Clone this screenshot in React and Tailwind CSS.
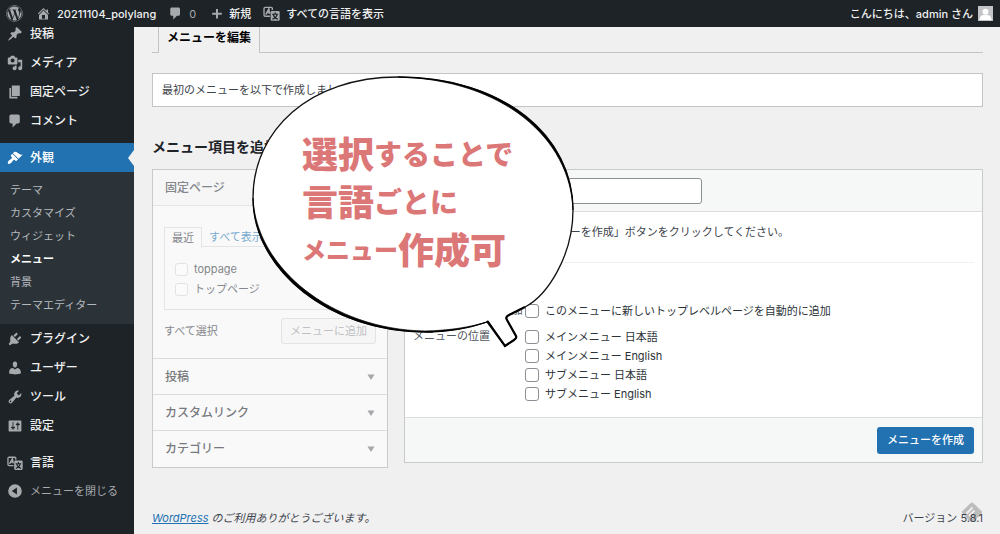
import { FaWordpress } from 'react-icons/fa'

const ICONS = {
  home: 'M16 8.5l1.53 1.53-1.06 1.06L10 4.6l-6.47 6.49-1.06-1.06L10 2.5l4 4v-2h2v4zm-6-2.46l6 5.99V18H4v-5.97zM12 17v-5H8v5h4z',
  plus: 'M18 8v3.4h-6.3v6.3H8.3v-6.3H2V8h6.3V1.7h3.4V8z',
  post: 'M10.44 3.02l1.82-1.82 6.36 6.35-1.83 1.82c-1.05-.68-2.48-.57-3.41.36l-.75.75c-.92.93-1.04 2.35-.35 3.41l-1.83 1.82-2.41-2.41-2.8 2.79c-.42.42-3.38 2.71-3.8 2.29s1.86-3.39 2.28-3.81l2.79-2.79L4.1 9.36l1.83-1.82c1.05.69 2.48.57 3.4-.36l.75-.75c.93-.92 1.05-2.35.36-3.41z',
  media: 'M13 11V4c0-.55-.45-1-1-1h-1.67L9 1H5L3.67 3H2c-.55 0-1 .45-1 1v7c0 .55.45 1 1 1h10c.55 0 1-.45 1-1zM7 4.5c1.38 0 2.5 1.12 2.5 2.5S8.38 9.5 7 9.5 4.5 8.38 4.5 7 5.62 4.5 7 4.5zM14 6h5v10.5c0 1.38-1.12 2.5-2.5 2.5S14 17.88 14 16.5s1.12-2.5 2.5-2.5c.17 0 .34.02.5.05V9h-3V6zm-4 8.05V13h2v3.5c0 1.38-1.12 2.5-2.5 2.5S7 17.88 7 16.5 8.12 14 9.5 14c.17 0 .34.02.5.05z',
  page: 'M6 15V2h10v13H6zm-1 1h8v2H3V5h2v11z',
  comment: 'M5 2h9c1.1 0 2 .9 2 2v7c0 1.1-.9 2-2 2h-2l-5 5v-5H5c-1.1 0-2-.9-2-2V4c0-1.1.9-2 2-2z',
  appearance: 'M14.48 11.06L7.41 3.99l1.5-1.5c.5-.56 2.3-.47 3.51.32 1.21.8 1.43 1.28 2.91 2.1 1.18.64 2.45 1.26 4.45.85zm-.71.71L6.7 4.7 4.93 6.47c-.39.39-.39 1.02 0 1.41l1.06 1.06c.39.39.39 1.03 0 1.42-.6.6-1.43 1.11-2.21 1.69-.35.26-.7.53-1.01.84C1.43 14.23.4 16.08 1.4 17.07c.99 1 2.84-.03 4.18-1.36.31-.31.58-.66.85-1.02.57-.78 1.08-1.61 1.69-2.21.39-.39 1.02-.39 1.41 0l1.06 1.06c.39.39 1.02.39 1.41 0z',
  plugins: 'M13.11 4.36L9.87 7.6 8 5.73l3.24-3.24c.35-.34 1.05-.2 1.56.32.52.51.66 1.21.31 1.55zm-8 1.77l.91-1.12 9.01 9.01-1.19.84c-.71.71-2.63 1.16-3.82 1.16H6.14L4.9 17.26c-.59.59-1.54.59-2.12 0-.59-.58-.59-1.53 0-2.12l1.24-1.24v-3.88c0-1.13.4-3.19 1.09-3.89zm7.26 3.97l3.24-3.24c.34-.35 1.04-.21 1.55.31.52.51.66 1.21.31 1.55l-3.24 3.25z',
  users: 'M10 9.25c-2.27 0-2.73-3.44-2.73-3.44C7 4.02 7.82 2 9.97 2c2.16 0 2.98 2.02 2.71 3.81 0 0-.41 3.44-2.68 3.44zm0 2.57L12.72 10c2.39 0 4.52 2.33 4.52 4.53v2.49s-3.65 1.13-7.24 1.13c-3.65 0-7.24-1.13-7.24-1.13v-2.49c0-2.25 1.94-4.48 4.47-4.48z',
  tools: 'M16.68 9.77c-1.34 1.34-3.3 1.67-4.95.99l-5.41 6.52c-.99.99-2.59.99-3.58 0s-.99-2.59 0-3.57l6.52-5.42c-.68-1.65-.35-3.61.99-4.95 1.28-1.28 3.12-1.62 4.72-1.06l-2.89 2.89 2.82 2.82 2.86-2.87c.53 1.58.18 3.39-1.08 4.65zM3.81 16.21c.4.39 1.04.39 1.43 0 .4-.4.4-1.04 0-1.43-.39-.4-1.03-.4-1.43 0-.39.39-.39 1.03 0 1.43z',
  settings: 'M18 16V4c0-.55-.45-1-1-1H3c-.55 0-1 .45-1 1v12c0 .55.45 1 1 1h14c.55 0 1-.45 1-1zM8 11h1c.55 0 1 .45 1 1s-.45 1-1 1H8v1.5c0 .28-.22.5-.5.5s-.5-.22-.5-.5V13H6c-.55 0-1-.45-1-1s.45-1 1-1h1V5.5c0-.28.22-.5.5-.5s.5.22.5.5V11zm5-2h-1c-.55 0-1-.45-1-1s.45-1 1-1h1V5.5c0-.28.22-.5.5-.5s.5.22.5.5V7h1c.55 0 1 .45 1 1s-.45 1-1 1h-1v5.5c0 .28-.22.5-.5.5s-.5-.22-.5-.5V9z',
  collapse: 'M10 1.5a8.5 8.5 0 1 0 0 17a8.5 8.5 0 0 0 0-17zM12.4 5.6v8.8L6 10z',
}

const MAIN_MENU = [
  { label: '投稿', icon: 'post' },
  { label: 'メディア', icon: 'media' },
  { label: '固定ページ', icon: 'page' },
  { label: 'コメント', icon: 'comment' },
]

const APPEARANCE_MENU = ['テーマ', 'カスタマイズ', 'ウィジェット', 'メニュー', '背景', 'テーマエディター']

const TOOL_MENU = [
  { label: 'プラグイン', icon: 'plugins' },
  { label: 'ユーザー', icon: 'users' },
  { label: 'ツール', icon: 'tools' },
  { label: '設定', icon: 'settings' },
]

const ACCORDION = ['投稿', 'カスタムリンク', 'カテゴリー']

const LOCATIONS = ['メインメニュー 日本語', 'メインメニュー English', 'サブメニュー 日本語', 'サブメニュー English']

function Icon({ name, className = 'size-4' }) {
  if (name === 'language') {
    return (
      <svg viewBox="0 0 20 20" className={`${className} shrink-0`} fill="none" stroke="currentColor" aria-hidden="true">
        <path d="M8.2 13.2H2.6a1.4 1.4 0 0 1-1.4-1.4V4.2a1.4 1.4 0 0 1 1.4-1.4h7a1.4 1.4 0 0 1 1.4 1.4v1.6" strokeWidth="1.6" />
        <path d="M3.2 11.2L6.8 4.8l1 5.6M4.6 8.8h3.2" strokeWidth="1.8" />
        <rect x="9" y="7" width="10.6" height="11.6" rx="1.4" fill="currentColor" stroke="none" />
        <path d="M14.3 8.6v1.8M10.8 10.9h7M12 11.2c.6 2.4 2.6 4.4 5.6 5.6M16.6 11.2c-.6 2.4-2.6 4.4-5.6 5.6" stroke="#1d2327" strokeWidth="1.4" />
      </svg>
    )
  }
  return (
    <svg viewBox="0 0 20 20" className={`${className} shrink-0`} fill="currentColor" fillRule="evenodd" aria-hidden="true">
      <path d={ICONS[name]} />
    </svg>
  )
}

function AdminBar() {
  return (
    <header className="relative z-10 flex h-[27px] items-center justify-between bg-[#1d2327] pl-1.5 pr-[7px] text-[11px] font-medium text-[#f0f0f1]">
      <div className="flex items-center">
        <a href="#" aria-label="WordPress" className="text-[#a7aaad]">
          <FaWordpress className="size-[17px]" />
        </a>
        <a href="#" className="ml-[13px] flex items-center gap-1.5">
          <Icon name="home" className="size-[15px] text-[#a7aaad]" />
          20211104_polylang
        </a>
        <a href="#" className="ml-3 flex items-center gap-1.5 text-[#a7aaad]">
          <Icon name="comment" className="size-[15px]" />
          <span className="font-normal">0</span>
        </a>
        <a href="#" className="ml-[15px] flex items-center gap-1.5">
          <Icon name="plus" className="size-3 text-[#a7aaad]" />
          新規
        </a>
        <a href="#" className="ml-3 flex items-center gap-1.5">
          <Icon name="language" className="size-[17px] text-[#a7aaad]" />
          すべての言語を表示
        </a>
      </div>
      <a href="#" className="flex items-center gap-[5px]">
        こんにちは、admin さん
        <svg viewBox="0 0 15 15" className="size-[15px]" aria-hidden="true">
          <rect width="15" height="15" fill="#c3c4c7" />
          <circle cx="7.5" cy="5.8" r="3" fill="#fff" />
          <path d="M1.5 14c0-3.5 2-4.800 4-5h4c2 .2 4 1.500 4 5z" fill="#fff" />
        </svg>
      </a>
    </header>
  )
}

function MenuItem({ label, icon }) {
  return (
    <li>
      <a href="#" className="flex h-[29px] items-center gap-[7px] pl-[7px] text-[12px] font-medium text-[#f0f0f1]">
        <Icon name={icon} className="size-4 text-[#a7aaad]" />
        {label}
      </a>
    </li>
  )
}

function Sidebar() {
  return (
    <nav className="w-[134px] shrink-0 bg-[#1d2327]">
      {/* list is scrolled a little under the admin bar */}
      <ul className="-mt-2">
        {MAIN_MENU.map((item) => <MenuItem key={item.label} {...item} />)}
        <li className="mt-2">
          <a href="#" className="flex h-[29px] items-center gap-[7px] bg-[#2271b1] pl-[7px] text-[12px] font-medium text-white">
            <Icon name="appearance" />
            <span className="flex-1">外観</span>
            <svg viewBox="0 0 6 16" className="h-4 w-1.5" fill="#f0f0f1" aria-hidden="true"><path d="M6 0v16L0 8z" /></svg>
          </a>
          <ul className="bg-[#2c3338] pt-1.5 pb-2">
            {APPEARANCE_MENU.map((label) => (
              <li key={label}>
                <a
                  href="#"
                  className={`flex h-[23px] items-center pl-2.5 text-[11px] ${
                    label === 'メニュー' ? 'font-bold text-white' : 'text-[#b4b9be]'
                  }`}
                >
                  {label}
                </a>
              </li>
            ))}
          </ul>
        </li>
        {TOOL_MENU.map((item) => <MenuItem key={item.label} {...item} />)}
        <li className="h-2" />
        <MenuItem label="言語" icon="language" />
        <li>
          <button type="button" className="flex h-7 items-center gap-[7px] pl-[7px] text-[11px] text-[#a7aaad]">
            <Icon name="collapse" />
            メニューを閉じる
          </button>
        </li>
      </ul>
    </nav>
  )
}

function ItemsPanel() {
  return (
    <div className="border border-[#c9cacc] bg-[#f9f9f9] text-[11px] text-[#84878b]">
      <h3 className="flex h-9 items-center border-b border-[#e4e5e6] bg-[#f6f6f6] px-3 text-[12px] font-medium">固定ページ</h3>
      <div className="border-b border-[#dcdcde] px-[11px] pt-[21px] pb-3.5">
        <div className="flex h-5">
          <button type="button" className="-mb-px h-[21px] border border-b-0 border-[#e4e5e6] bg-[#f9f9f9] px-[7px]">最近</button>
          <button type="button" className="flex-1 border-b border-[#e4e5e6] px-[7px] text-left text-[#7aaad0]">すべて表示</button>
        </div>
        <div className="border border-t-0 border-[#e4e5e6] px-2.5 pt-3 pb-2.5">
          {['toppage', 'トップページ'].map((label) => (
            <label key={label} className="flex h-5 items-center gap-1.5">
              <input type="checkbox" disabled className="size-[13px] appearance-none rounded-[3px] border border-[#e2e3e5] bg-[#fbfbfb]" />
              {label}
            </label>
          ))}
        </div>
        <div className="mt-2 flex items-center justify-between">
          <button type="button">すべて選択</button>
          <button type="button" disabled className="h-[26px] rounded-[3px] border border-[#e2e3e5] bg-[#f6f6f6] px-2 text-[#bfc1c4]">
            メニューに追加
          </button>
        </div>
      </div>
      {ACCORDION.map((label) => (
        <button
          key={label}
          type="button"
          className="flex h-9 w-full items-center justify-between border-b border-[#dcdcde] px-3 text-[12px] font-medium text-[#77797d] last:border-b-0"
        >
          {label}
          <svg viewBox="0 0 8 6" className="h-1.5 w-2" fill="#a5a7aa" aria-hidden="true"><path d="M.5.5h7L4 6z" /></svg>
        </button>
      ))}
    </div>
  )
}

function Check({ label }) {
  return (
    <label className="flex h-[19px] items-center gap-1.5 text-[#2c3338]">
      <input type="checkbox" className="size-3.5 appearance-none rounded-[3px] border border-[#8c8f94] bg-white" />
      {label}
    </label>
  )
}

function StructurePanel() {
  return (
    <form className="border border-[#c9cacc] bg-white text-[11px] text-[#3c434a]" onSubmit={(e) => e.preventDefault()}>
      <div className="flex h-[42px] items-center border-b border-[#dcdcde] bg-[#f6f7f7] pl-[72px]">
        <input type="text" aria-label="メニュー名" className="h-[26px] w-[225px] rounded-[3px] border border-[#8c8f94] bg-white px-2" />
      </div>
      <div className="px-2 pt-2.5 pb-3.5">
        <p className="border-b border-[#f0f0f1] pb-5 leading-5">
          メニュー名を入力して 「メニューを作成」ボタンをクリックしてください。
        </p>
        <dl aria-label="メニュー設定" className="mt-[38px] grid grid-cols-[112px_1fr] gap-y-[7px] text-[#50575e]">
          <dt className="whitespace-nowrap leading-[19px]">固定ページを自動追加</dt>
          <dd><Check label="このメニューに新しいトップレベルページを自動的に追加" /></dd>
          <dt className="leading-[19px]">メニューの位置</dt>
          <dd>{LOCATIONS.map((label) => <Check key={label} label={label} />)}</dd>
        </dl>
      </div>
      <div className="flex h-[45px] items-center justify-end border-t border-[#dcdcde] bg-[#f6f7f7] px-2">
        <button type="submit" className="h-[27px] rounded-[3px] bg-[#2271b1] px-2.5 font-medium text-white">メニューを作成</button>
      </div>
    </form>
  )
}

function SpeechBubble() {
  return (
    <div className="absolute left-[250px] top-[74px] z-20 h-[276px] w-[326px]">
      <svg viewBox="250 74 326 276" className="absolute inset-0 size-full" aria-hidden="true">
        <path
          d="M487 322C470 328 450 332 425 332C330 332 253 270 253 198C253 130 310 77 398 77C505 77 573 137 573 210C573 255 548 295 525 307L509 315Q505 317 507 320L516 336Q517 338 514 340L505 346L488 321"
          fill="#fff"
          stroke="#111"
          strokeWidth="1.3"
        />
        {/* swelling parts of the pen stroke */}
        <path d="M253 198C253 270 330 332 425 332C450 332 470 328 487 322C470 327 450 330.5 425 331C332 329.5 256 268 253 198z" stroke="#000" strokeWidth=".7" />
        <path d="M398 77C505 77 573 137 573 210C570.5 138.500 503 79.500 398 77z" stroke="#000" strokeWidth=".7" />
        <path d="M525 307L509 315Q505 317 507 320L516 336Q517 338 514 340L505 346L487 321" fill="none" stroke="#000" strokeWidth="2.2" />
      </svg>
      <p className="relative pl-[52px] pt-[57px] text-[28px] font-black whitespace-nowrap text-[#dc7777]">
        <span className="flex h-12 items-center"><span className="text-[36px]">選択</span>することで</span>
        <span className="flex h-12 items-center"><span className="text-[36px]">言語</span>ごとに</span>
        <span className="flex h-12 items-center"><span className="text-[24px]">メニュー</span><span className="text-[36px]">作成可</span></span>
      </p>
    </div>
  )
}

export default function App() {
  return (
    <div className="relative flex min-h-screen flex-col bg-[#f0f0f1] font-['Inter','Noto_Sans_CJK_JP',sans-serif] leading-4">
      <AdminBar />
      <div className="flex flex-1">
        <Sidebar />
        <main className="flex min-w-0 flex-1 flex-col pl-[18px] pr-[17px]">
          <div className="flex h-[26px] border-b border-[#c3c4c7] pl-1.5">
            <a href="#" className="-mb-px flex items-center border-x border-[#c3c4c7] bg-[#f0f0f1] px-2 pb-1 text-[12px] font-bold text-black">
              メニューを編集
            </a>
          </div>
          <div className="mt-5 border border-[#c3c4c7] bg-white px-[9px] py-2 text-[11px] text-[#3c434a]">
            最初のメニューを以下で作成しましょう。
          </div>
          <h2 className="mt-[30px] text-[14px] font-semibold leading-5 text-[#1d2327]">メニュー項目を追加</h2>
          <div className="mt-3 grid grid-cols-[236px_1fr] items-start gap-4">
            <ItemsPanel />
            <StructurePanel />
          </div>
          <footer className="mt-auto flex justify-between pb-2 text-[11px] text-[#3c434a]">
            <p className="italic">
              <a href="#" className="text-[#2271b1] underline">WordPress</a> のご利用ありがとうございます。
            </p>
            <p className="relative">
              <svg viewBox="0 0 22 20" className="absolute bottom-1 right-0 h-5 w-[22px]" aria-hidden="true">
                <path d="M9.5 1.2q1.5-1.5 3 0l8 7.8q1.200 1.200 0 2.400L14 18.500q-1 1-2 1h-2q-1 0-2-1L1.500 11.400q-1.200-1.200 0-2.400z" fill="#bcbcbc" />
                <path d="M5.5 11.5L11.5 5.5M8 14l5.5-5.5M10.5 16.5l2-2" fill="none" stroke="#f0f0f1" strokeWidth="1.8" />
              </svg>
              <span className="relative">バージョン 5.8.1</span>
            </p>
          </footer>
        </main>
      </div>
      <SpeechBubble />
    </div>
  )
}
